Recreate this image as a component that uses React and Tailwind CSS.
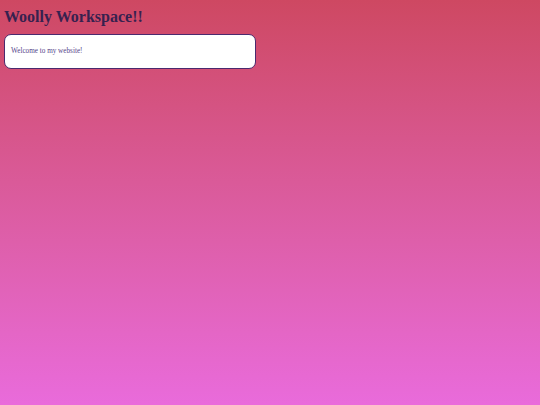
export default function App() {
  return (
    <div
      className="min-h-[405px] w-full bg-gradient-to-b from-[#ce4862] to-[#e96bdb] px-[4px] pt-[6px]"
      style={{ fontFamily: '"Liberation Serif", serif' }}
    >
      <h1 className="text-[16px] font-bold leading-[22px] text-[#37214f]">Woolly Workspace!!</h1>
      <div className="mt-[6px] w-[252px] h-[35px] rounded-[7px] border-[1.5px] border-[#4a2a6e] bg-white flex items-center px-[6px]">
        <p className="text-[7.2px] text-[#56458a]">Welcome to my website!</p>
      </div>
    </div>
  );
}
